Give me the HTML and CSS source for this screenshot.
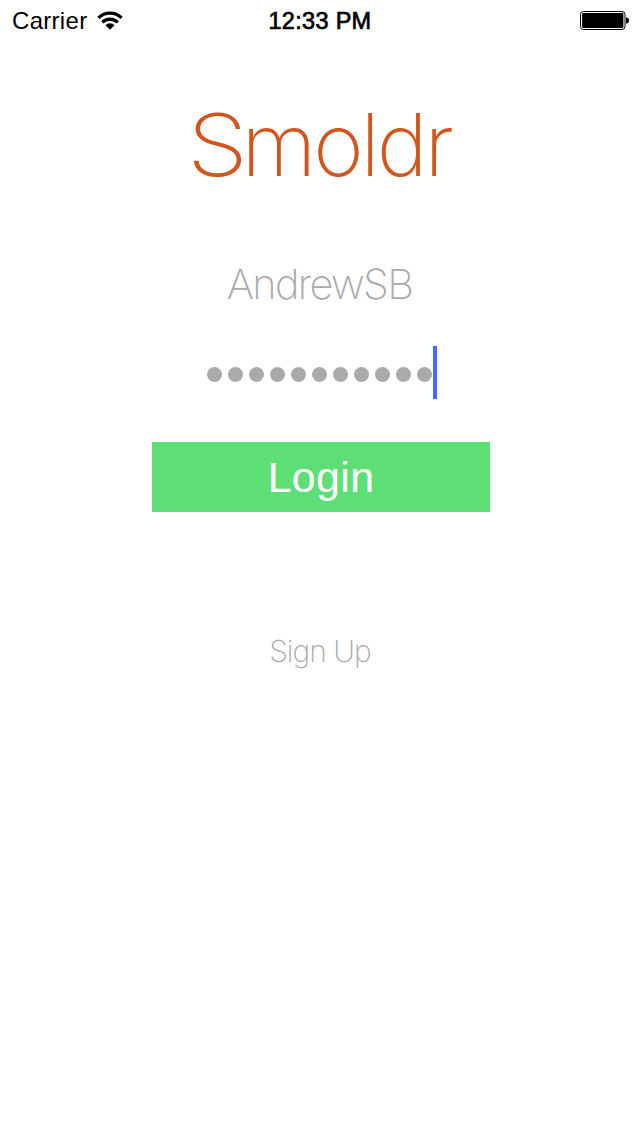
FILE: index.html
```html
<!DOCTYPE html>
<html lang="en"><head><meta charset="utf-8"><title>Smoldr</title><link rel="stylesheet" href="styles.css"></head>
<body>
<header class="status">
<div class="carrier"><span>Carrier</span>
<svg class="wifi" width="26" height="20" viewBox="0 0 26 20"><g fill="none" stroke="#000" stroke-width="3.2"><path d="M1.4 6.9a16.5 16.5 0 0 1 23.2 0"/><path d="M5.3 11.3a10.9 10.9 0 0 1 15.4 0"/></g><path d="M8.4 14.2a6.5 6.5 0 0 1 9.2 0L13 18.8z"/></svg></div>
<div class="time">12:33 PM</div>
<svg class="battery" width="50" height="20" viewBox="0 0 50 20"><rect x=".5" y=".5" width="44.5" height="18" rx="3" fill="#fff" stroke="#000"/><rect x="2.1" y="2.1" width="41.3" height="14.8" rx="1"/><path d="M46 6.2q3 .6 3 3.3t-3 3.3z"/></svg>
</header>
<main class="login">
<h1 class="logo"><span class="initial">S</span>moldr</h1>
<div class="username">AndrewSB</div>
<div class="password"><i class="dot"></i><i class="dot"></i><i class="dot"></i><i class="dot"></i><i class="dot"></i><i class="dot"></i><i class="dot"></i><i class="dot"></i><i class="dot"></i><i class="dot"></i><i class="dot"></i><span class="caret"></span></div>
<button class="submit">Login</button>
<a class="signup">Sign Up</a>
</main>
</body></html>
```
FILE: styles.css
```css
body{margin:0;width:640px;height:1136px;background:#fff;overflow:hidden;font-family:"Liberation Sans",Arial,sans-serif}
.status{height:42px;display:grid;grid-template-columns:1fr auto 1fr;align-items:center;padding:0 10px 0 12px;color:#000;font-size:24px;line-height:42px}
.carrier{display:flex;align-items:center;gap:10px;letter-spacing:.3px}
.time{font-size:23.5px;-webkit-text-stroke:.7px #000;letter-spacing:.3px;margin-right:2px}
.battery{justify-self:end}
.login{display:flex;flex-direction:column;align-items:center}
.logo,.username,.signup{font-family:Inter,sans-serif;font-weight:200}
.logo{margin:53px 2px 0 0;height:100px;line-height:100px;font-size:86px;letter-spacing:-3.1px;color:#d2551e}
.initial{display:inline-block;transform:scaleX(1.14);transform-origin:left;margin-right:4px}
.username{margin:59px 1px 0 0;height:60px;line-height:60px;font-size:41.5px;letter-spacing:-1.7px;color:#aaa}
.password{margin:32px 0 0 4px;height:53px;display:flex;align-items:center;gap:6px}
.dot{width:15px;height:15px;margin-top:3px;border-radius:50%;background:#aaa}
.caret{width:4px;height:53px;margin-left:-5px;background:#446df2}
.submit{margin:43px 0 0 2px;width:338px;height:70px;border:0;padding:0;background:#5edf75;color:#fff;font:43px/70px "Liberation Sans",Arial,sans-serif;letter-spacing:.3px}
.signup{margin-top:119px;height:40px;line-height:40px;font-size:30px;letter-spacing:-1px;color:#aaa}
```
